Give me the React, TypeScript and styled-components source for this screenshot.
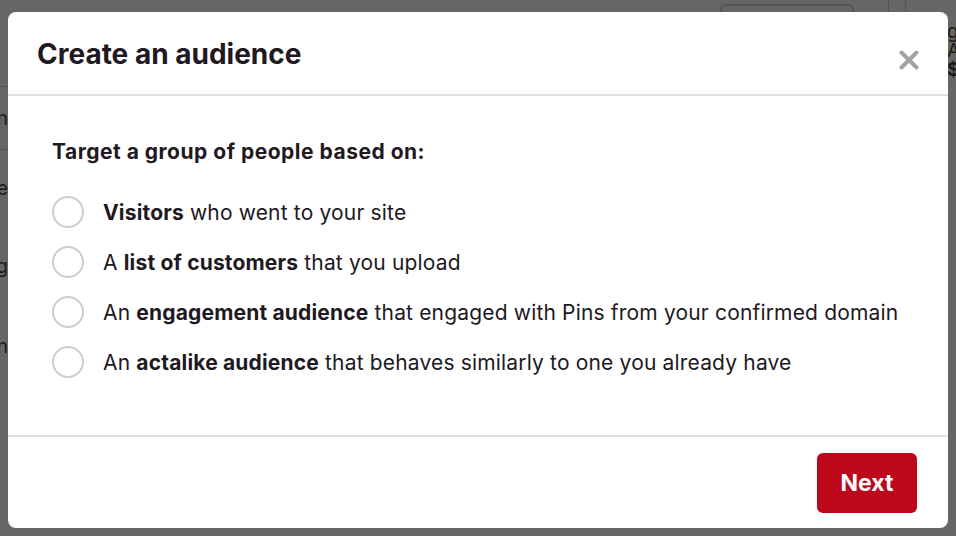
import React from "react";
import styled, { createGlobalStyle } from "styled-components";

const Global = createGlobalStyle`
  html, body { margin: 0; padding: 0; }
  body {
    background: #666666;
    font-family: Inter, "Liberation Sans", Arial, sans-serif;
    width: 956px;
    height: 536px;
    overflow: hidden;
  }
`;

const Page = styled.div`
  position: relative;
  width: 956px;
  height: 536px;
  background: #666666;
  overflow: hidden;
`;

/* dimmed page behind the overlay */
const Behind = styled.div`
  position: absolute;
  inset: 0;
  display: flex;
  justify-content: space-between;
  color: #1a1a1a;
  font-size: 19px;
`;

const LeftStrip = styled.div`
  width: 8px;
  display: flex;
  flex-direction: column;
  padding-top: 86px;
  overflow: hidden;
`;

const StripRow = styled.div<{ $h: number; $line?: boolean }>`
  height: ${(p) => p.$h}px;
  border-top: ${(p) => (p.$line ? "1px solid #555" : "none")};
  display: flex;
  align-items: center;
  justify-content: flex-end;
  white-space: nowrap;
`;

const TopBar = styled.div`
  flex: 1;
  display: flex;
  justify-content: flex-end;
  align-items: flex-start;
  gap: 34px;
  padding: 4px 41px 0 0;
`;

const BgButton = styled.div`
  width: 130px;
  height: 30px;
  border: 2px solid #555;
  border-radius: 6px;
`;

const BgDivider = styled.div`
  width: 16px;
  height: 14px;
  margin-top: -4px;
  border-left: 1px solid #555;
  border-right: 1px solid #555;
`;

const RightStrip = styled.div`
  width: 9px;
  display: flex;
  flex-direction: column;
  padding-top: 22px;
  line-height: 19px;
  overflow: hidden;
  white-space: nowrap;
`;

const Overlay = styled.div`
  position: absolute;
  inset: 0;
  display: flex;
  padding: 12px 8px 8px 8px;
  box-sizing: border-box;
`;

const Modal = styled.div`
  width: 940px;
  height: 516px;
  background: #ffffff;
  border-radius: 8px;
  display: flex;
  flex-direction: column;
  overflow: hidden;
`;

const Header = styled.div`
  height: 82px;
  display: flex;
  align-items: center;
  justify-content: space-between;
  padding: 0 29px;
  border-bottom: 2px solid #e0e0e0;
  flex-shrink: 0;
`;

const Title = styled.h1`
  margin: 0;
  font-size: 28px;
  font-weight: 700;
  color: #211922;
  padding-top: 2px;
`;

const CloseButton = styled.button`
  border: none;
  background: transparent;
  padding: 0;
  width: 20px;
  height: 20px;
  margin-top: 14px;
  cursor: pointer;
  display: flex;
`;

const Body = styled.div`
  flex: 1;
  padding: 43px 44px 0 44px;
  border-bottom: 2px solid #e0e0e0;
`;

const Lead = styled.div`
  font-size: 21px;
  font-weight: 700;
  letter-spacing: 0.5px;
  color: #211922;
  margin-bottom: 32px;
`;

const Options = styled.div`
  display: flex;
  flex-direction: column;
  gap: 18px;
`;

const Option = styled.label`
  display: flex;
  align-items: center;
  gap: 19px;
  font-size: 21px;
  letter-spacing: 0.17px;
  color: #211922;
  cursor: pointer;
`;

const Radio = styled.span`
  width: 28px;
  height: 28px;
  border: 2px solid #cdcdcd;
  border-radius: 50%;
  flex-shrink: 0;
`;

const Footer = styled.div`
  height: 91px;
  display: flex;
  justify-content: flex-end;
  align-items: flex-start;
  padding: 16px 31px 0 0;
  box-sizing: border-box;
`;

const NextButton = styled.button`
  width: 100px;
  height: 60px;
  border: none;
  border-radius: 6px;
  background: #bd081c;
  color: #ffffff;
  font-family: Inter, "Liberation Sans", Arial, sans-serif;
  font-size: 23px;
  font-weight: 700;
  cursor: pointer;
`;

const options: { pre?: string; bold: string; post: string }[] = [
  { bold: "Visitors", post: " who went to your site" },
  { pre: "A ", bold: "list of customers", post: " that you upload" },
  {
    pre: "An ",
    bold: "engagement audience",
    post: " that engaged with Pins from your confirmed domain",
  },
  {
    pre: "An ",
    bold: "actalike audience",
    post: " that behaves similarly to one you already have",
  },
];

export default function App() {
  return (
    <>
      <Global />
      <Page>
        <Behind>
          <LeftStrip>
            <StripRow $h={62} $line>n</StripRow>
            <StripRow $h={76} $line>e</StripRow>
            <StripRow $h={80}>g</StripRow>
            <StripRow $h={80}>n</StripRow>
          </LeftStrip>
          <TopBar>
            <BgButton />
            <BgDivider />
          </TopBar>
          <RightStrip>
            <span>g</span>
            <span>Al</span>
            <b>$</b>
          </RightStrip>
        </Behind>
        <Overlay>
          <Modal>
            <Header>
              <Title>Create an audience</Title>
              <CloseButton aria-label="Close">
                <svg width="20" height="20" viewBox="0 0 20 20">
                  <path
                    d="M2.5 2.5 L17.5 17.5 M17.5 2.5 L2.5 17.5"
                    stroke="#a3a3a3"
                    strokeWidth="4"
                    strokeLinecap="round"
                  />
                </svg>
              </CloseButton>
            </Header>
            <Body>
              <Lead>Target a group of people based on:</Lead>
              <Options>
                {options.map((o, i) => (
                  <Option key={i}>
                    <Radio />
                    <span>
                      {o.pre}
                      <b>{o.bold}</b>
                      {o.post}
                    </span>
                  </Option>
                ))}
              </Options>
            </Body>
            <Footer>
              <NextButton>Next</NextButton>
            </Footer>
          </Modal>
        </Overlay>
      </Page>
    </>
  );
}
